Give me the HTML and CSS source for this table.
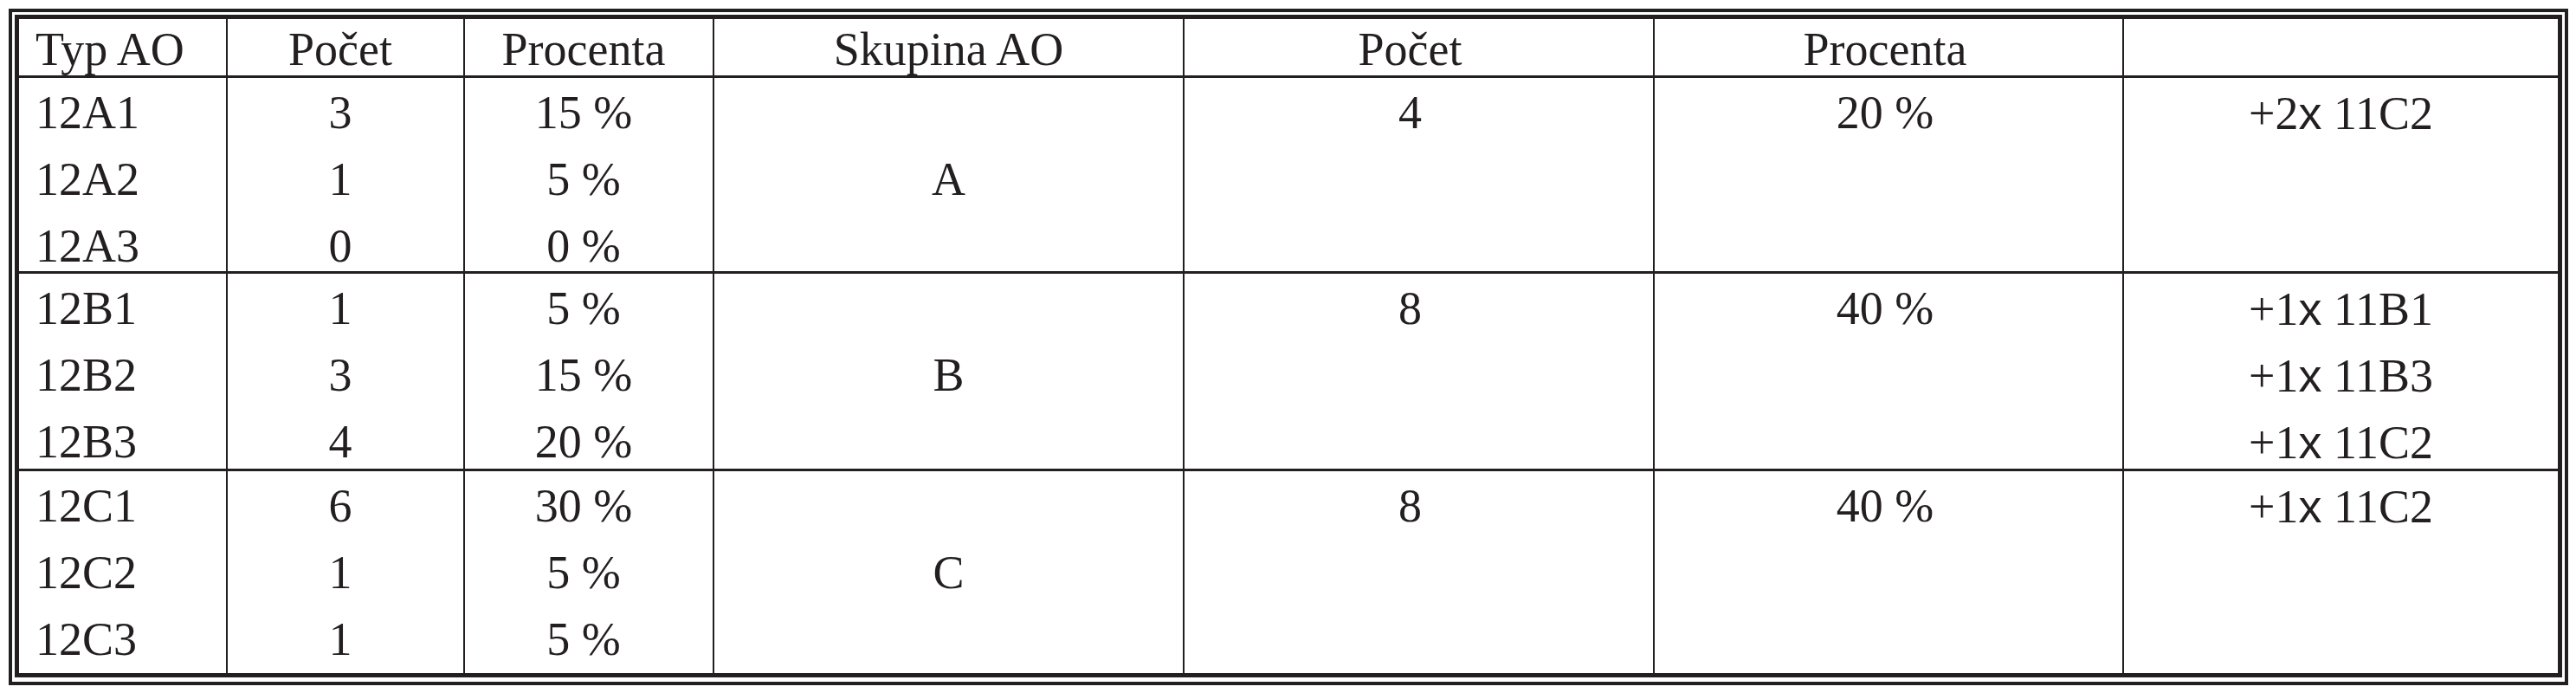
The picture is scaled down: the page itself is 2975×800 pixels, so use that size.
FILE: index.html
```html
<!DOCTYPE html>
<html lang="cs">
<head>
<meta charset="utf-8">
<title>Typ AO</title>
<link rel="stylesheet" href="styles.css">
</head>
<body>
<div class="frame">
  <div class="tbl">
    <div class="cell head c1">Typ AO</div>
    <div class="cell head c2">Počet</div>
    <div class="cell head c3">Procenta</div>
    <div class="cell head c4">Skupina AO</div>
    <div class="cell head c5">Počet</div>
    <div class="cell head c6">Procenta</div>
    <div class="cell head c7"></div>

    <div class="cell body c1"><div class="ln">12A1</div><div class="ln">12A2</div><div class="ln">12A3</div></div>
    <div class="cell body c2"><div class="ln">3</div><div class="ln">1</div><div class="ln">0</div></div>
    <div class="cell body c3"><div class="ln">15 %</div><div class="ln">5 %</div><div class="ln">0 %</div></div>
    <div class="cell body c4 grp"><div class="ln">A</div></div>
    <div class="cell body c5"><div class="ln">4</div></div>
    <div class="cell body c6"><div class="ln">20 %</div></div>
    <div class="cell body c7"><div class="ln">+2<span class="x">x</span> 11C2</div></div>

    <div class="cell body c1"><div class="ln">12B1</div><div class="ln">12B2</div><div class="ln">12B3</div></div>
    <div class="cell body c2"><div class="ln">1</div><div class="ln">3</div><div class="ln">4</div></div>
    <div class="cell body c3"><div class="ln">5 %</div><div class="ln">15 %</div><div class="ln">20 %</div></div>
    <div class="cell body c4 grp"><div class="ln">B</div></div>
    <div class="cell body c5"><div class="ln">8</div></div>
    <div class="cell body c6"><div class="ln">40 %</div></div>
    <div class="cell body c7"><div class="ln">+1<span class="x">x</span> 11B1</div><div class="ln">+1<span class="x">x</span> 11B3</div><div class="ln">+1<span class="x">x</span> 11C2</div></div>

    <div class="cell body c1"><div class="ln">12C1</div><div class="ln">12C2</div><div class="ln">12C3</div></div>
    <div class="cell body c2"><div class="ln">6</div><div class="ln">1</div><div class="ln">1</div></div>
    <div class="cell body c3"><div class="ln">30 %</div><div class="ln">5 %</div><div class="ln">5 %</div></div>
    <div class="cell body c4 grp"><div class="ln">C</div></div>
    <div class="cell body c5"><div class="ln">8</div></div>
    <div class="cell body c6"><div class="ln">40 %</div></div>
    <div class="cell body c7"><div class="ln">+1<span class="x">x</span> 11C2</div></div>
  </div>
</div>
</body>
</html>
```

FILE: styles.css
```css
html, body {
  margin: 0;
  padding: 0;
  background: #ffffff;
}

body {
  font-family: "Liberation Serif", "Times New Roman", serif;
  font-size: 54px;
  color: #231f20;
}

.frame {
  margin: 10px 0 0 10px;
  width: fit-content;
  border: 4px solid #231f20;
  padding: 3px 3px 5px 3px;
  background: #ffffff;
}

.tbl {
  display: grid;
  grid-template-columns: 239px 272px 286px 541px 541px 540px 501px;
  grid-template-rows: 65px 223px 225px 233px;
  column-gap: 2px;
  row-gap: 3px;
  border: 5px solid #231f20;
  background: #231f20;
}

.cell {
  background: #ffffff;
  text-align: center;
  white-space: nowrap;
}

.head {
  padding-top: 5px;
  line-height: 60px;
}

.body {
  padding-top: 2px;
  line-height: 77px;
}

.ln {
  height: 77px;
}

.c1 {
  text-align: left;
  padding-left: 19px;
}

.c2, .c3 {
  padding-right: 12px;
}

.c5 {
  padding-right: 20px;
}

.c6 {
  padding-right: 8px;
}

.grp {
  padding-top: 79px;
}

.x {
  font-family: "Liberation Sans", Arial, sans-serif;
}
```
